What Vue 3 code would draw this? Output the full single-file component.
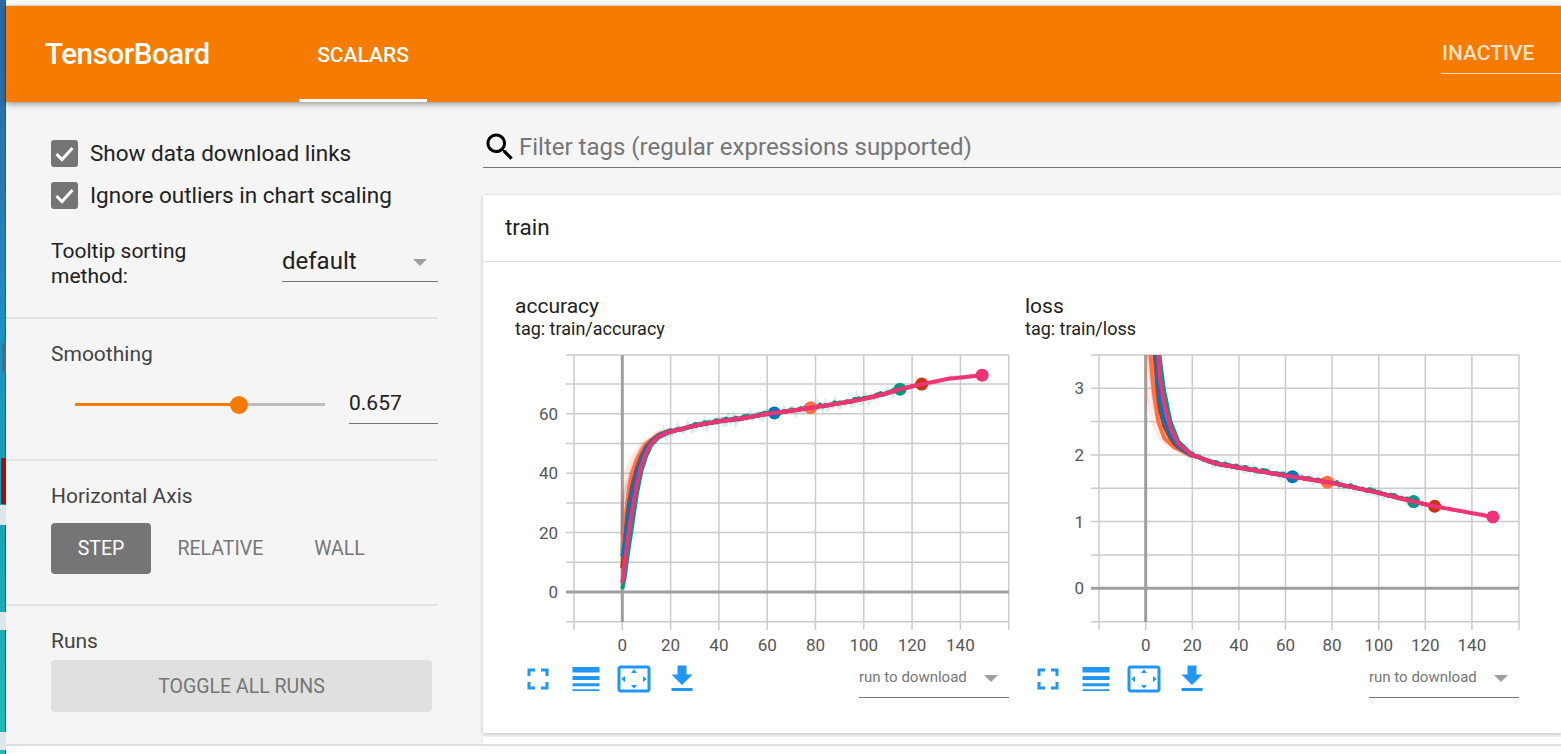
<script setup>
// training curves, [step, value] knots read off the chart
const accFast = [[0, 14], [1, 22], [2, 30], [3, 36], [4, 40], [6, 44.5], [8, 47.5], [10, 50], [15, 53], [20, 54.5]]
const accSlow = [[0, 1], [1, 5], [2, 11], [4, 22], [6, 33], [8, 41], [10, 46], [12, 49.5], [15, 52], [20, 54]]
const accTail = [[20, 54], [30, 56], [40, 57.5], [50, 58.5], [60, 60], [70, 61], [80, 62.3], [90, 63.5], [100, 65], [110, 67], [115, 68.3], [124, 70], [135, 71.8], [149, 73]]
const lossFast = [[0, 9], [2, 3.5], [3.3, 3], [5.3, 2.5], [8, 2.25], [12, 2.12], [20, 1.98]]
const lossSlow = [[0, 9], [5.9, 3.5], [7.7, 3], [10.6, 2.5], [14, 2.2], [20, 2]]
const lossTail = [[20, 2], [30, 1.87], [40, 1.81], [60, 1.69], [80, 1.58], [100, 1.43], [115, 1.3], [124, 1.23], [149, 1.07]]

// drawn in this order, the last one ends up on top
const runs = [
  { color: '#009988', end: 115, mix: 1, start: 1 },
  { color: '#ff7043', end: 78, mix: 0, start: 14 },
  { color: '#cc3311', end: 124, mix: 0.25, start: 8 },
  { color: '#0077bb', end: 63, mix: 0.38, start: 12 },
  { color: '#ee3377', end: 149, mix: 0.72, start: 3 }
]

function lerp(table, s) {
  for (let i = 1; i < table.length; i++) {
    const [a, va] = table[i - 1]
    const [b, vb] = table[i]
    if (s <= b) return va + ((vb - va) * (s - a)) / (b - a)
  }
  return table[table.length - 1][1]
}

function noise(i, seed) {
  const v = Math.sin(i * 12.9898 + seed * 78.233) * 43758.5453
  return v - Math.floor(v) - 0.5
}

function steps(end) {
  const out = []
  for (let s = 0; s < 20; s += 0.5) out.push(s)
  for (let s = 20; s <= end; s++) out.push(s)
  return out
}

function buildChart(c) {
  const px = (s) => c.x0 + s * c.xs
  const py = (v) => c.y0 + v * c.ys
  const value = (run, s, mix) => {
    if (s >= 20) return lerp(c.tail, s)
    const v = lerp(c.fast, s) * (1 - mix) + lerp(c.slow, s) * mix
    return c.useStart ? v + (run.start - lerp(c.fast, 0) * (1 - mix) - lerp(c.slow, 0) * mix) * Math.exp(-s) : v
  }
  const lines = runs.map((run, r) => {
    const pts = steps(run.end)
    const line = pts.map((s, i) => {
      const wiggle = r === 0 && s >= 20 ? noise(i, 9) * 2.4 - 0.6 : 0
      return `${px(s).toFixed(1)},${(py(value(run, s, run.mix)) + wiggle).toFixed(1)}`
    }).join(' ')
    // the unsmoothed line stays a little left of the smoothed one during the climb
    const pale = pts.map((s, i) => {
      const jitter = s < 15 ? 0 : noise(i, r + 1) * c.jitter * (r === 0 ? 1.5 : 0.5)
      const shift = s < 20 ? (3.4 * (20 - s)) / 20 : 0
      return `${px(Math.max(0, s - shift)).toFixed(1)},${(py(value(run, s, run.mix)) + jitter).toFixed(1)}`
    }).join(' ')
    return {
      color: run.color,
      line,
      pale,
      cx: px(run.end),
      cy: py(value(run, run.end, run.mix))
    }
  })
  return { ...c, lines }
}

const charts = [
  buildChart({
    title: 'accuracy', tag: 'tag: train/accuracy', clip: 'clip-acc',
    x0: 107.3, xs: 2.415, y0: 247, ys: -2.97, left: 59, right: 493.7, labelX: 43,
    fast: accFast, slow: accSlow, tail: accTail, useStart: true, jitter: 7,
    grid: [70, 60, 50, 40, 30, 20, 10, -10], labels: [60, 40, 20, 0]
  }),
  buildChart({
    title: 'loss', tag: 'tag: train/loss', clip: 'clip-loss',
    x0: 120.7, xs: 2.33, y0: 243.3, ys: -66.7, left: 74, right: 494, labelX: 59,
    fast: lossFast, slow: lossSlow, tail: lossTail, useStart: false, jitter: 5,
    grid: [3, 2.5, 2, 1.5, 1, 0.5, -0.5], labels: [3, 2, 1, 0]
  })
]

const xTicks = [0, 20, 40, 60, 80, 100, 120, 140]
const plotTop = 10
const plotBottom = 277
</script>

<template>
  <div class="page">
    <div class="desktop">
      <svg width="6" height="754">
        <rect x="1" y="458" width="5" height="46" fill="#a01010" />
        <rect x="0" y="505" width="6" height="20" fill="#dfe6ea" />
        <rect x="0" y="612" width="6" height="18" fill="#dfe6ea" />
        <rect x="2" y="343" width="4" height="30" fill="#3f6f96" />
        <rect x="0" y="732" width="6" height="18" fill="#dfe6ea" />
      </svg>
    </div>
    <div class="app">
      <div class="topline"></div>
      <header class="toolbar">
        <div class="brand">TensorBoard</div>
        <div class="tab">SCALARS</div>
        <div class="status">INACTIVE</div>
      </header>

      <div class="content">
        <aside class="sidebar">
          <section class="section first">
            <label class="check">
              <span class="box">
                <svg width="27" height="27" viewBox="0 0 27 27"><path d="M5.5 14l5.5 5.5L21.5 8" fill="none" stroke="#fff" stroke-width="3" /></svg>
              </span>
              <span class="check-text">Show data download links</span>
            </label>
            <label class="check second">
              <span class="box">
                <svg width="27" height="27" viewBox="0 0 27 27"><path d="M5.5 14l5.5 5.5L21.5 8" fill="none" stroke="#fff" stroke-width="3" /></svg>
              </span>
              <span class="check-text">Ignore outliers in chart scaling</span>
            </label>
            <div class="sort-row">
              <div class="sort-label">Tooltip sorting<br />method:</div>
              <div class="sort-select">
                <span>default</span>
                <i class="caret"></i>
              </div>
            </div>
          </section>

          <section class="section smoothing">
            <div class="heading">Smoothing</div>
            <div class="slider-row">
              <div class="slider">
                <div class="slider-fill"></div>
                <div class="slider-knob"></div>
              </div>
              <div class="slider-value">0.657</div>
            </div>
          </section>

          <section class="section axis">
            <div class="heading">Horizontal Axis</div>
            <div class="axis-buttons">
              <div class="axis-btn active">STEP</div>
              <div class="axis-btn relative">RELATIVE</div>
              <div class="axis-btn">WALL</div>
            </div>
          </section>

          <section class="section runs">
            <div class="heading">Runs</div>
            <div class="toggle-btn">TOGGLE ALL RUNS</div>
          </section>
        </aside>

        <main class="main">
          <div class="filter">
            <svg class="search" width="36" height="36" viewBox="0 0 24 24">
              <path d="M15.5 14h-.79l-.28-.27C15.41 12.59 16 11.11 16 9.5 16 5.91 13.09 3 9.5 3S3 5.91 3 9.5 5.91 16 9.5 16c1.61 0 3.09-.59 4.23-1.57l.27.28v.79l5 4.99L20.49 19l-4.99-5zm-6 0C7.01 14 5 11.99 5 9.5S7.01 5 9.5 5 14 7.01 14 9.5 11.99 14 9.5 14z" />
            </svg>
            <span>Filter tags (regular expressions supported)</span>
          </div>

          <div class="card">
            <div class="card-head">train</div>
            <div class="card-body">
              <div v-for="chart in charts" :key="chart.title" class="chart">
                <div class="chart-title">{{ chart.title }}</div>
                <div class="chart-tag">{{ chart.tag }}</div>
                <svg class="plot" width="510" height="310">
                  <defs>
                    <clipPath :id="chart.clip">
                      <rect :x="chart.left" :y="plotTop" :width="chart.right - chart.left + 2" :height="plotBottom - plotTop" />
                    </clipPath>
                  </defs>
                  <g stroke="#cbcbcb" stroke-width="1.5">
                    <line :x1="chart.left - 8" :x2="chart.right" :y1="plotTop" :y2="plotTop" />
                    <line
                      v-for="g in chart.grid"
                      :key="g"
                      :x1="chart.left - 8"
                      :x2="chart.right"
                      :y1="chart.y0 + g * chart.ys"
                      :y2="chart.y0 + g * chart.ys"
                    />
                    <line :x1="chart.left" :x2="chart.left" :y1="plotTop" :y2="plotBottom + 8" />
                    <line :x1="chart.right" :x2="chart.right" :y1="plotTop" :y2="plotBottom + 8" />
                    <line
                      v-for="t in xTicks.slice(1)"
                      :key="t"
                      :x1="chart.x0 + t * chart.xs"
                      :x2="chart.x0 + t * chart.xs"
                      :y1="plotTop"
                      :y2="plotBottom + 8"
                    />
                  </g>
                  <g stroke="#9e9e9e" stroke-width="3">
                    <line :x1="chart.left - 8" :x2="chart.right" :y1="chart.y0" :y2="chart.y0" />
                    <line :x1="chart.x0" :x2="chart.x0" :y1="plotTop" :y2="plotBottom" />
                  </g>
                  <line :x1="chart.x0" :x2="chart.x0" :y1="plotBottom" :y2="plotBottom + 8" stroke="#cbcbcb" stroke-width="1.5" />

                  <g :clip-path="`url(#${chart.clip})`" fill="none">
                    <polyline
                      v-for="l in chart.lines"
                      :key="'p' + l.color"
                      :points="l.pale"
                      :stroke="l.color"
                      stroke-width="3.5"
                      stroke-opacity="0.16"
                    />
                    <g v-for="l in chart.lines" :key="l.color">
                      <circle :cx="l.cx" :cy="l.cy" r="6.5" :fill="l.color" />
                      <polyline :points="l.line" :stroke="l.color" stroke-width="4" stroke-linejoin="round" />
                    </g>
                  </g>

                  <g class="tick-text" text-anchor="end">
                    <text v-for="v in chart.labels" :key="v" :x="chart.labelX" :y="chart.y0 + v * chart.ys + 6">{{ v }}</text>
                  </g>
                  <g class="tick-text" text-anchor="middle">
                    <text v-for="t in xTicks" :key="t" :x="chart.x0 + t * chart.xs" y="306">{{ t }}</text>
                  </g>
                </svg>
                <div class="chart-tools">
                  <div class="tool">
                    <svg width="36" height="36" viewBox="0 0 24 24"><path d="M7 14H5v5h5v-2H7v-3zm-2-4h2V7h3V5H5v5zm12 7h-3v2h5v-5h-2v3zM14 5v2h3v3h2V5h-5z" /></svg>
                  </div>
                  <div class="tool">
                    <svg width="36" height="36" viewBox="0 0 24 24"><path d="M3 4h18v3.6H3zM3 10h18v2.6H3zM3 14.8h18v2H3zM3 18.8h18v1.2H3z" /></svg>
                  </div>
                  <div class="tool">
                    <svg width="36" height="36" viewBox="0 0 24 24"><path d="M12.01 5.5L10 8h4l-1.99-2.5zM18 10v4l2.5-1.99L18 10zM6 10l-2.5 2.01L6 14v-4zm8 6h-4l2.01 2.5L14 16zm7-13H3c-1.1 0-2 .9-2 2v14c0 1.1.9 2 2 2h18c1.1 0 2-.9 2-2V5c0-1.1-.9-2-2-2zm0 16.01H3V4.99h18v14.02z" /></svg>
                  </div>
                  <div class="tool">
                    <svg width="36" height="36" viewBox="0 0 24 24"><path d="M19 9h-4V3H9v6H5l7 7 7-7zM5 18v2h14v-2H5z" /></svg>
                  </div>
                  <div class="run-select">
                    <span>run to download</span>
                    <i class="caret small"></i>
                  </div>
                </div>
              </div>
            </div>
          </div>
          <div class="next-card"></div>
        </main>
      </div>
      <div class="bottom-line"></div>
    </div>
  </div>
</template>

<style>
html,
body {
  margin: 0;
  background: #fff;
  overflow: hidden;
}
</style>

<style scoped>
.page {
  display: flex;
  width: 1561px;
  height: 754px;
  overflow: hidden;
  font-family: Roboto, "Liberation Sans", sans-serif;
  color: #212121;
}

.desktop {
  width: 6px;
  flex: none;
  background: linear-gradient(180deg, #2a6aa6 0%, #2b78ae 25%, #1b93bd 45%, #17a5b8 70%, #1fbcb4 100%);
  box-shadow: inset -1px 0 0 #1b6478;
}

.desktop svg {
  display: block;
}

.app {
  flex: 1;
  min-width: 0;
  display: flex;
  flex-direction: column;
}

.topline {
  height: 6px;
  background: #fbfbfb;
  box-shadow: inset 0 -1px 0 #e4e4e4;
}

/* header */
.toolbar {
  position: relative;
  z-index: 2;
  flex: none;
  display: flex;
  align-items: stretch;
  height: 96px;
  padding-left: 39px;
  background: #f57c00;
  color: #fff;
  box-shadow: 0 2px 6px rgba(0, 0, 0, 0.4);
}

.brand {
  width: 164px;
  font-size: 29.5px;
  font-weight: 500;
  line-height: 97px;
  white-space: nowrap;
  letter-spacing: -0.4px;
}

.tab {
  width: 128px;
  margin-left: 90px;
  box-sizing: border-box;
  border-bottom: 3px solid #fff;
  font-size: 21px;
  font-weight: 500;
  line-height: 98px;
  text-align: center;
}

.status {
  align-self: flex-start;
  margin-left: auto;
  width: 120px;
  box-sizing: border-box;
  margin-top: 31px;
  padding-left: 1px;
  height: 37px;
  border-bottom: 1.5px solid rgba(255, 255, 255, 0.75);
  color: rgba(255, 255, 255, 0.8);
  font-size: 21px;
  font-weight: 500;
  line-height: 32px;
}

.content {
  flex: none;
  display: flex;
  height: 642px;
  background: #f5f5f5;
}

/* sidebar */
.sidebar {
  flex: none;
  width: 432px;
  font-size: 21px;
}

.section {
  box-sizing: border-box;
  padding-left: 45px;
  border-bottom: 2px solid #e3e3e3;
}

.section.first {
  height: 217px;
  padding-top: 38px;
}

.section.smoothing {
  height: 142px;
  padding-top: 23px;
}

.section.axis {
  height: 145px;
  padding-top: 23px;
}

.section.runs {
  border-bottom: none;
  padding-top: 23px;
}

.heading {
  color: #444;
  line-height: 24px;
}

.check {
  display: flex;
  align-items: center;
  height: 27px;
  font-size: 22.5px;
  color: #212121;
  white-space: nowrap;
}

.check-text {
  line-height: 25px;
  margin-bottom: 1px;
}

.check.second {
  margin-top: 15px;
}

.box {
  width: 27px;
  height: 27px;
  margin-right: 12px;
  border-radius: 3px;
  background: #757575;
  flex: none;
}

.box svg {
  display: block;
}

.sort-row {
  display: flex;
  margin-top: 30px;
}

.sort-label {
  width: 231px;
  line-height: 24.5px;
}

.sort-select {
  position: relative;
  box-sizing: border-box;
  width: 156px;
  height: 43px;
  border-bottom: 1.5px solid #757575;
  font-size: 24px;
  line-height: 45px;
}

.caret {
  position: absolute;
  right: 11px;
  top: 20px;
  width: 0;
  height: 0;
  border-left: 7.5px solid transparent;
  border-right: 7.5px solid transparent;
  border-top: 7.5px solid #9e9e9e;
}

.slider-row {
  display: flex;
  align-items: flex-start;
  margin-top: 19px;
}

.slider {
  position: relative;
  width: 250px;
  height: 3px;
  margin: 18px 24px 0;
  background: #bdbdbd;
}

.slider-fill {
  width: 164px;
  height: 100%;
  background: #f57c00;
}

.slider-knob {
  position: absolute;
  left: 155px;
  top: -7px;
  width: 18px;
  height: 18px;
  border-radius: 50%;
  background: #f57c00;
}

.slider-value {
  box-sizing: border-box;
  width: 89px;
  height: 39px;
  border-bottom: 1.5px solid #757575;
  font-size: 21px;
  line-height: 36px;
}

.axis-buttons {
  display: flex;
  margin-top: 15px;
  color: #757575;
  font-size: 19.5px;
  text-align: center;
}

.axis-btn {
  height: 51px;
  padding: 0 25.5px;
  line-height: 52px;
}

.axis-btn.relative {
  margin-left: 1px;
}

.axis-btn.active {
  padding: 0;
  width: 100px;
  border-radius: 4px;
  background: #757575;
  color: #fff;
}

.toggle-btn {
  width: 381px;
  height: 52px;
  margin-top: 7px;
  border-radius: 4px;
  background: #e0e0e0;
  color: #757575;
  font-size: 19.5px;
  line-height: 54px;
  text-align: center;
}

/* main */
.main {
  flex: 1;
  min-width: 0;
  margin-left: 45px;
}

.filter {
  box-sizing: border-box;
  display: flex;
  align-items: center;
  height: 66px;
  margin-top: 0;
  padding-top: 25px;
  border-bottom: 1.5px solid #757575;
  color: #757575;
  font-size: 24px;
  white-space: nowrap;
}

.search {
  flex: none;
  margin: 0 1px 0 -1px;
}

.card {
  margin-top: 27px;
  background: #fff;
  box-shadow: 0 1px 4px rgba(0, 0, 0, 0.22);
}

.card-head {
  box-sizing: border-box;
  height: 67px;
  padding-left: 22px;
  border-bottom: 1.5px solid #e0e0e0;
  font-size: 22.5px;
  line-height: 64px;
}

.card-body {
  display: flex;
  box-sizing: border-box;
  height: 471px;
  padding: 32px 0 0 32px;
}

.chart {
  flex: none;
  width: 510px;
}

.chart-title {
  font-size: 21px;
  line-height: 24px;
}

.chart-tag {
  font-size: 18px;
  line-height: 21px;
}

.plot {
  display: block;
  margin-top: 6px;
}

.tick-text {
  fill: #555;
  font-size: 17px;
}

.chart-tools {
  display: flex;
  align-items: flex-start;
  width: 494px;
  margin-left: -1px;
  padding-top: 6px;
}

.tool {
  width: 48px;
  height: 36px;
  display: flex;
  justify-content: center;
}

.tool svg {
  fill: #2196f3;
}

.run-select {
  position: relative;
  box-sizing: border-box;
  width: 150px;
  height: 37px;
  margin-left: auto;
  margin-right: -1px;
  border-bottom: 1.5px solid #757575;
  color: #757575;
  font-size: 15px;
  line-height: 32px;
}

.caret.small {
  right: 11px;
  top: 14px;
}

.next-card {
  height: 8px;
  margin-top: 4px;
  background: #fff;
  box-shadow: 0 1px 2px rgba(0, 0, 0, 0.1);
}

.bottom-line {
  height: 2px;
  background: #dedee4;
}
</style>
